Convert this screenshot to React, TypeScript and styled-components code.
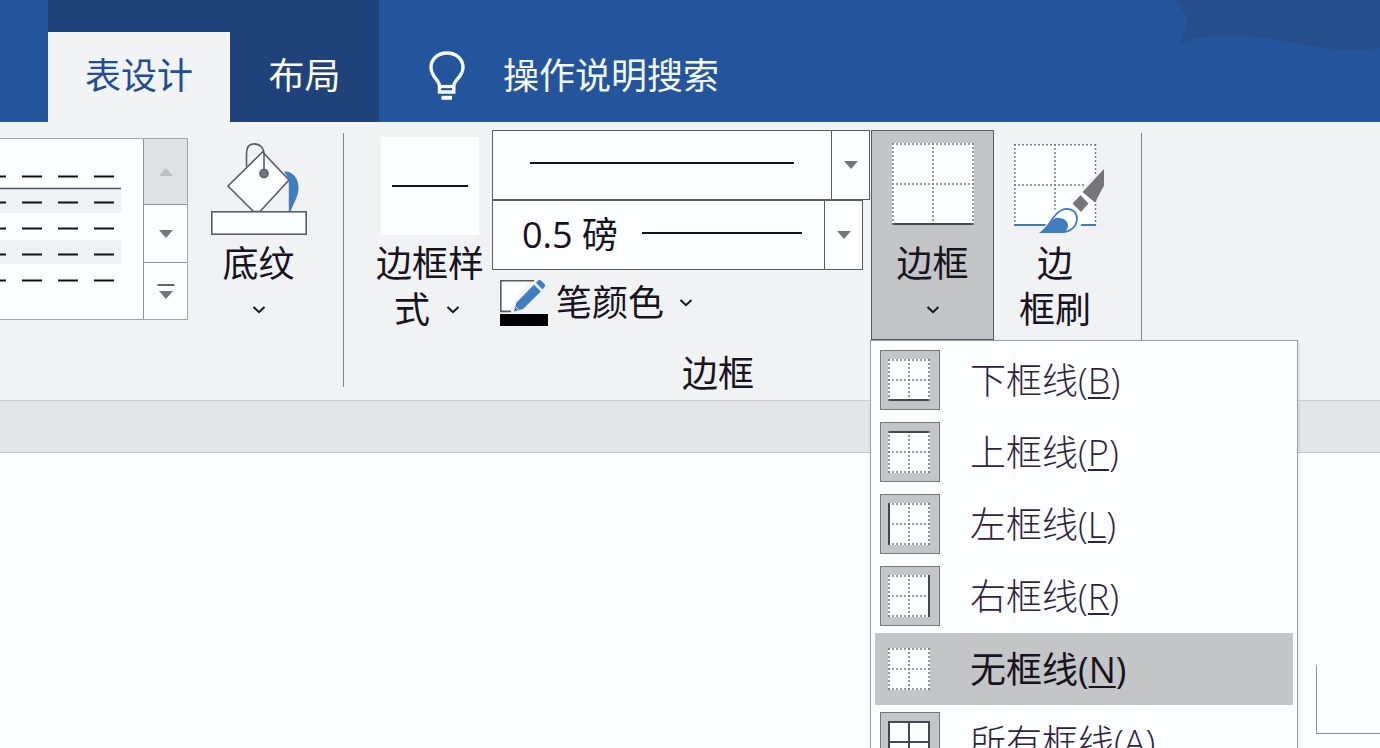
import React from 'react';
import styled, { createGlobalStyle } from 'styled-components';

const ink = '#17131f';
const line = '#5d5a66';
const paper = '#fdfeff';
const accent = '#3f7cc0';

const GlobalStyle = createGlobalStyle`
  *, *::before, *::after { box-sizing: border-box; }
  html { overflow: hidden; }
  body {
    margin: 0;
    color: ${ink};
    font-family: "Open Sans", "Noto Sans CJK SC", sans-serif;
    font-size: 36px;
    line-height: 46px;
  }
  button, input, select { font: inherit; color: inherit; }
  button { margin: 0; padding: 0; border: 0; background: none; cursor: pointer; }
  svg { display: block; flex: none; }
`;

const Page = styled.div`
  display: flex;
  flex-direction: column;
  height: 100vh;
  overflow: hidden;
  background: ${paper};
`;

const TitleBar = styled.header`
  position: relative;
  display: flex;
  flex: none;
  height: 122px;
  padding-left: 48px;
  background: #24549b;
`;

const Swirl = styled.svg`
  position: absolute;
  top: 0;
  right: 0;
`;

const ContextTabs = styled.nav`
  display: flex;
  padding-top: 32px;
  background: #1e4279;
`;

const Tab = styled.button<{ $active?: boolean; $width: number }>`
  width: ${p => p.$width}px;
  height: 90px;
  padding-bottom: 2px;
  color: ${p => (p.$active ? '#1f4e96' : '#fff')};
  background: ${p => (p.$active ? '#f2f3f5' : 'transparent')};
`;

const Search = styled.label`
  display: flex;
  align-items: center;
  gap: 38px;
  margin-left: 50px;
  padding-top: 30px;
`;

const SearchInput = styled.input`
  width: 260px;
  padding: 0;
  border: 0;
  outline: 0;
  background: none;
  color: #fff;
  &::placeholder { color: #f4f8ff; opacity: 1; }
`;

const Ribbon = styled.section`
  display: flex;
  flex: none;
  align-items: flex-start;
  height: 279px;
  padding-top: 8px;
  background: #f1f2f4;
  border-bottom: 1px solid #cfd0d3;
`;

const Gallery = styled.div`
  display: flex;
  margin-top: 8px;
  height: 182px;
  border: 1px solid #a3a2ab;
  border-left: 0;
  background: ${paper};
`;

const Spinner = styled.div`
  display: grid;
  grid-template-rows: 65px 58px 1fr;
  width: 44px;
  border-left: 1px solid #92909b;
`;

const SpinButton = styled.button`
  display: grid;
  place-items: center;
  & + & { border-top: 1px solid #92909b; }
  &:disabled { background: #e0e1e3; }
`;

const Divider = styled.div`
  flex: none;
  width: 1px;
  height: 254px;
  margin-top: 3px;
  background: #85838e;
`;

const BigButton = styled.button<{ $width: number; $active?: boolean }>`
  display: flex;
  flex-direction: column;
  align-items: center;
  width: ${p => p.$width}px;
  height: 210px;
  padding-top: 12px;
  border: 1px solid ${p => (p.$active ? line : 'transparent')};
  background: ${p => (p.$active ? '#c4c5c7' : 'transparent')};
`;

const IconSlot = styled.span`
  display: flex;
  align-items: flex-start;
  justify-content: center;
  height: 98px;
`;

const Caption = styled.span<{ $inlineArrow?: boolean }>`
  display: flex;
  align-items: center;
  justify-content: center;
  gap: 16px;
  height: 46px;
  padding-right: ${p => (p.$inlineArrow ? 6 : 0)}px;
  white-space: nowrap;
`;

const StyleSwatch = styled.span`
  display: grid;
  place-items: center;
  width: 98px;
  height: 98px;
  margin-top: -6px;
  background: ${paper};
`;

const ShadingSlot = styled.div`
  margin: 0 30px 0 16px;
`;

const BorderGroup = styled.section`
  display: flex;
  flex-direction: column;
  padding: 0 25px 0 27px;
`;

const GroupRow = styled.div`
  display: flex;
  align-items: flex-start;
`;

const GroupLabel = styled.div`
  margin-top: 11px;
  padding-left: 311px;
`;

const PenColumn = styled.div`
  display: flex;
  flex-direction: column;
  align-items: flex-start;
  width: 379px;
  margin-left: 3px;
`;

const Combo = styled.label<{ $width: number }>`
  display: grid;
  width: ${p => p.$width}px;
  height: 70px;
  background: ${paper};
  border: 1px solid ${line};
  & > * { grid-area: 1 / 1; }
`;

const ComboSelect = styled.select`
  width: 100%;
  padding: 0 50px 0 29px;
  border: 0;
  outline: 0;
  background: none;
  appearance: none;
`;

const StrokeSample = styled.span<{ $width: number }>`
  width: ${p => p.$width}px;
  height: 2px;
  background: ${ink};
`;

const ComboFace = styled.span<{ $gap: number }>`
  display: flex;
  align-items: center;
  justify-content: flex-end;
  gap: ${p => p.$gap}px;
  pointer-events: none;
  & > ${StrokeSample} { margin-bottom: 4px; }
`;

const ComboArrow = styled.span`
  display: grid;
  place-items: center;
  width: 38px;
  height: 100%;
  border-left: 1px solid ${line};
`;

const PenColor = styled.button`
  display: flex;
  align-items: center;
  gap: 8px;
  height: 66px;
  margin-left: 8px;
  & > svg:last-child { margin-left: 7px; }
`;

const MenuAnchor = styled.div`
  position: relative;
`;

const Menu = styled.div`
  position: absolute;
  z-index: 2;
  top: 210px;
  left: -1px;
  width: 428px;
  padding: 3px 4px;
  border: 1px solid #9b9aa4;
  background: ${paper};
  box-shadow: 1px 1px 3px rgba(60, 60, 90, 0.12);
`;

const MenuItem = styled.button<{ $active?: boolean }>`
  display: flex;
  align-items: center;
  gap: 30px;
  width: 100%;
  height: 72px;
  margin: ${p => (p.$active ? '1px 0' : '0')};
  padding-left: 5px;
  color: ${p => (p.$active ? ink : '#2e233e')};
  background: ${p => (p.$active ? '#c4c5c7' : 'transparent')};
  font-weight: ${p => (p.$active ? 400 : 300)};
  white-space: nowrap;
`;

const MenuText = styled.span`
  padding-top: 2px;
`;

const Hotkey = styled.u`
  text-decoration-thickness: 2px;
  text-underline-offset: 3px;
`;

const MenuIcon = styled.span<{ $boxed: boolean }>`
  display: grid;
  place-items: center;
  width: 60px;
  height: 60px;
  padding-right: 2px;
  border: 1px solid ${p => (p.$boxed ? '#75737d' : 'transparent')};
  background: ${p => (p.$boxed ? '#c4c5c7' : 'transparent')};
`;

const Band = styled.div`
  flex: none;
  height: 52px;
  background: #e4e5e7;
  border-bottom: 1px solid #c3c4c8;
`;

const Document = styled.main`
  display: flex;
  flex: 1;
  align-items: flex-start;
  justify-content: flex-end;
  padding-top: 212px;
`;

const MarginCorner = styled.div`
  width: 64px;
  height: 69px;
  border-left: 1px solid #8f8d98;
  border-bottom: 1px solid #8f8d98;
`;

const Chevron = () => (
  <svg width="14" height="8" viewBox="0 0 14 8" fill="none" stroke={ink} strokeWidth="2">
    <path d="M1.5 1 L7 6.2 L12.5 1" />
  </svg>
);

const Triangle = ({ up, bar, color = '#77757c' }: { up?: boolean; bar?: boolean; color?: string }) => (
  <svg width="18" height={bar ? 15 : 8} viewBox={bar ? '0 -7 18 15' : '0 0 18 8'}>
    <path d={up ? 'M2 8 L9 0 L16 8 Z' : 'M2 0 L16 0 L9 8 Z'} fill={color} />
    {bar && <path d="M0.5 -6 H17.5" stroke="#66646c" strokeWidth="2" />}
  </svg>
);

type Side = 'top' | 'bottom' | 'left' | 'right' | 'all';

const BorderGrid = ({ size, side }: { size: number; side?: Side }) => {
  const a = 1;
  const b = size - 1;
  const c = size / 2;
  const has = (s: Side) => side === s || side === 'all';
  const rule = (d: string, solid: boolean) => (
    <path
      d={d}
      stroke={solid ? '#4a4650' : '#7b7a82'}
      strokeWidth={solid ? 2 : 1.6}
      strokeDasharray={solid ? undefined : '2 2'}
    />
  );
  return (
    <svg width={size} height={size} viewBox={`0 0 ${size} ${size}`} fill="none">
      <rect width={size} height={size} fill={paper} />
      {rule(`M${c} 0V${size}`, side === 'all')}
      {rule(`M0 ${c}H${size}`, side === 'all')}
      {rule(`M0 ${a}H${size}`, has('top'))}
      {rule(`M0 ${b}H${size}`, has('bottom'))}
      {rule(`M${a} 0V${size}`, has('left'))}
      {rule(`M${b} 0V${size}`, has('right'))}
    </svg>
  );
};

const Bulb = () => (
  <svg width="36" height="50" viewBox="0 0 36 50" fill="none" stroke="#f7faff">
    <path d="M10.5 41 V34.5 C9.8 28.5 2 25.5 2 16.5 C2 8 9 2 18 2 C27 2 34 8 34 16.5 C34 25.5 25.6 28.5 24.8 34.5 V41 Z" strokeWidth="3.4" />
    <path d="M10.5 35.5 H25" strokeWidth="3.2" />
    <path d="M12.5 46.8 H23" strokeWidth="4" />
  </svg>
);

const DashedTable = () => (
  <svg width="143" height="180" viewBox="0 139 143 180">
    <rect x="0" y="190" width="121" height="23" fill="#f0f1f4" />
    <rect x="0" y="240" width="121" height="24" fill="#f0f1f4" />
    <path d="M0 188.5 H121" stroke="#55525b" strokeWidth="1.6" />
    {[176.5, 202.5, 228.5, 254.5, 280.5].map(y => (
      <path key={y} d={`M-14 ${y} H115`} stroke="#111" strokeWidth="2" strokeDasharray="20 16" />
    ))}
  </svg>
);

const Bucket = () => (
  <svg width="96" height="93" viewBox="210 142 96 93" fill="none" stroke={line} strokeWidth="1.6">
    <path d="M261.5 151 L227 185 L252.500 210.500 H259 L288 179 Z" fill={paper} />
    <path d="M283 170.500 C291 170 297.500 176 297.500 187 C297.500 196 292 203 289.500 210.500 L287.800 210.500 V178 Z" fill={accent} stroke="none" />
    <path d="M245.500 165.500 V153 C245.500 146 248 142.900 253 142.900 C259 142.900 263 147 263 153 V172" />
    <circle cx="263" cy="172.500" r="4" fill="#77757c" />
    <rect x="210.800" y="210.800" width="94.400" height="22.400" fill={paper} />
  </svg>
);

const Pencil = () => (
  <svg width="48" height="46" viewBox="500 280 48 46" fill="none">
    <path d="M501.600 281.600 H531 L513 301 L511 310.600 H501.600 Z" fill={paper} />
    <path d="M534 280.800 H500.800 V311.400 H511" stroke={line} strokeWidth="1.6" />
    <path d="M514 311.500 L516.500 302.500 L534 284.800 L540.800 291.500 L523 309 Z" fill={accent} />
    <path d="M515.800 306.800 L518.800 309.800" stroke="#f1f2f4" strokeWidth="1" />
    <path d="M536 282.800 L538.500 280.200 Q540 279.500 541.500 281 L544.500 284 Q545.500 285.500 544.500 287 L542.500 289.500 Z" fill={accent} />
    <rect x="500" y="314" width="48" height="12" fill="#000" />
  </svg>
);

const BorderPainter = () => (
  <svg width="100" height="93" viewBox="1005 143 100 93" fill="none">
    <rect x="1014" y="144" width="82" height="82" fill={paper} />
    <g stroke="#7b7a82" strokeWidth="1.5" strokeDasharray="2 2">
      <path d="M1014 144.800H1096M1014 185H1096M1014.800 144V225M1055 144V225M1095.500 144V225" />
    </g>
    <path d="M1014 225H1096" stroke={accent} strokeWidth="2" />
    <path d="M1036 235.500 C1046 230 1052 208 1067 205 L1069 201 L1104 166 V189 L1083 214 C1084 226 1077 233 1064 235.500 Z" fill="#f1f2f4" />
    <path d="M1046 224 C1050 214 1056 206 1064 205.500 L1074 199 L1094 179 V214 L1080 224 Z" fill={paper} />
    <path d="M1104 169 V185.500 L1095 202.500 L1082.500 192 Z" fill="#77757a" />
    <path d="M1080.500 195 L1088.500 203.500 L1081 212 L1072.500 203.500 Z" fill="#77757a" />
    <path d="M1042 232 C1050 226 1055 209 1067 208.800 C1073 208.800 1077 213 1077 218.500 C1077 226 1071 232 1062 232 Z" fill={paper} stroke={accent} strokeWidth="1.8" />
    <path d="M1039 233 C1046 229 1052 218 1057 217.800 C1064 218 1068 221 1068 226 C1068 229 1066 231 1063 233 Z" fill={accent} />
  </svg>
);

const items: { label: string; hotkey: string; side?: Side }[] = [
  { label: '下框线', hotkey: 'B', side: 'bottom' },
  { label: '上框线', hotkey: 'P', side: 'top' },
  { label: '左框线', hotkey: 'L', side: 'left' },
  { label: '右框线', hotkey: 'R', side: 'right' },
  { label: '无框线', hotkey: 'N' },
  { label: '所有框线', hotkey: 'A', side: 'all' },
];

export default function App() {
  return (
    <Page>
      <GlobalStyle />
      <TitleBar>
        <Swirl width="204" height="54" viewBox="0 0 204 54">
          <path d="M0 0 H204 V48 C150 55 120 40 78 37 C45 34 20 36 4 44 L12 20 Z" fill="#264c87" opacity="0.85" />
        </Swirl>
        <ContextTabs>
          <Tab $active $width={182}>表设计</Tab>
          <Tab $width={149}>布局</Tab>
        </ContextTabs>
        <Search>
          <Bulb />
          <SearchInput type="text" placeholder="操作说明搜索" aria-label="操作说明搜索" />
        </Search>
      </TitleBar>

      <Ribbon>
        <Gallery>
          <DashedTable />
          <Spinner>
            <SpinButton disabled aria-label="向上"><Triangle up color="#bfc0c2" /></SpinButton>
            <SpinButton aria-label="向下"><Triangle /></SpinButton>
            <SpinButton aria-label="其他"><Triangle bar /></SpinButton>
          </Spinner>
        </Gallery>
        <ShadingSlot>
          <BigButton $width={109}>
            <IconSlot><Bucket /></IconSlot>
            <Caption>底纹</Caption>
            <Caption><Chevron /></Caption>
          </BigButton>
        </ShadingSlot>
        <Divider />

        <BorderGroup>
          <GroupRow>
            <BigButton $width={118}>
              <IconSlot>
                <StyleSwatch><StrokeSample $width={76} /></StyleSwatch>
              </IconSlot>
              <Caption>边框样</Caption>
              <Caption $inlineArrow>式 <Chevron /></Caption>
            </BigButton>
            <PenColumn>
              <Combo $width={378}>
                <ComboSelect aria-label="笔样式"><option aria-label="单实线" /></ComboSelect>
                <ComboFace $gap={37}>
                  <StrokeSample $width={264} />
                  <ComboArrow><Triangle /></ComboArrow>
                </ComboFace>
              </Combo>
              <Combo $width={371}>
                <ComboSelect aria-label="笔划粗细"><option>0.5 磅</option></ComboSelect>
                <ComboFace $gap={22}>
                  <StrokeSample $width={160} />
                  <ComboArrow><Triangle /></ComboArrow>
                </ComboFace>
              </Combo>
              <PenColor><Pencil />笔颜色 <Chevron /></PenColor>
            </PenColumn>
            <MenuAnchor>
              <BigButton $width={123} $active aria-haspopup="menu" aria-expanded="true">
                <IconSlot><BorderGrid size={82} side="bottom" /></IconSlot>
                <Caption>边框</Caption>
                <Caption><Chevron /></Caption>
              </BigButton>
              <Menu role="menu">
                {items.map(item => (
                  <MenuItem key={item.hotkey} role="menuitem" $active={!item.side}>
                    <MenuIcon $boxed={!!item.side}><BorderGrid size={42} side={item.side} /></MenuIcon>
                    <MenuText>{item.label}(<Hotkey>{item.hotkey}</Hotkey>)</MenuText>
                  </MenuItem>
                ))}
              </Menu>
            </MenuAnchor>
            <BigButton $width={122}>
              <IconSlot><BorderPainter /></IconSlot>
              <Caption>边</Caption>
              <Caption>框刷</Caption>
            </BigButton>
          </GroupRow>
          <GroupLabel>边框</GroupLabel>
        </BorderGroup>
        <Divider />
      </Ribbon>

      <Band />
      <Document>
        <MarginCorner />
      </Document>
    </Page>
  );
}
